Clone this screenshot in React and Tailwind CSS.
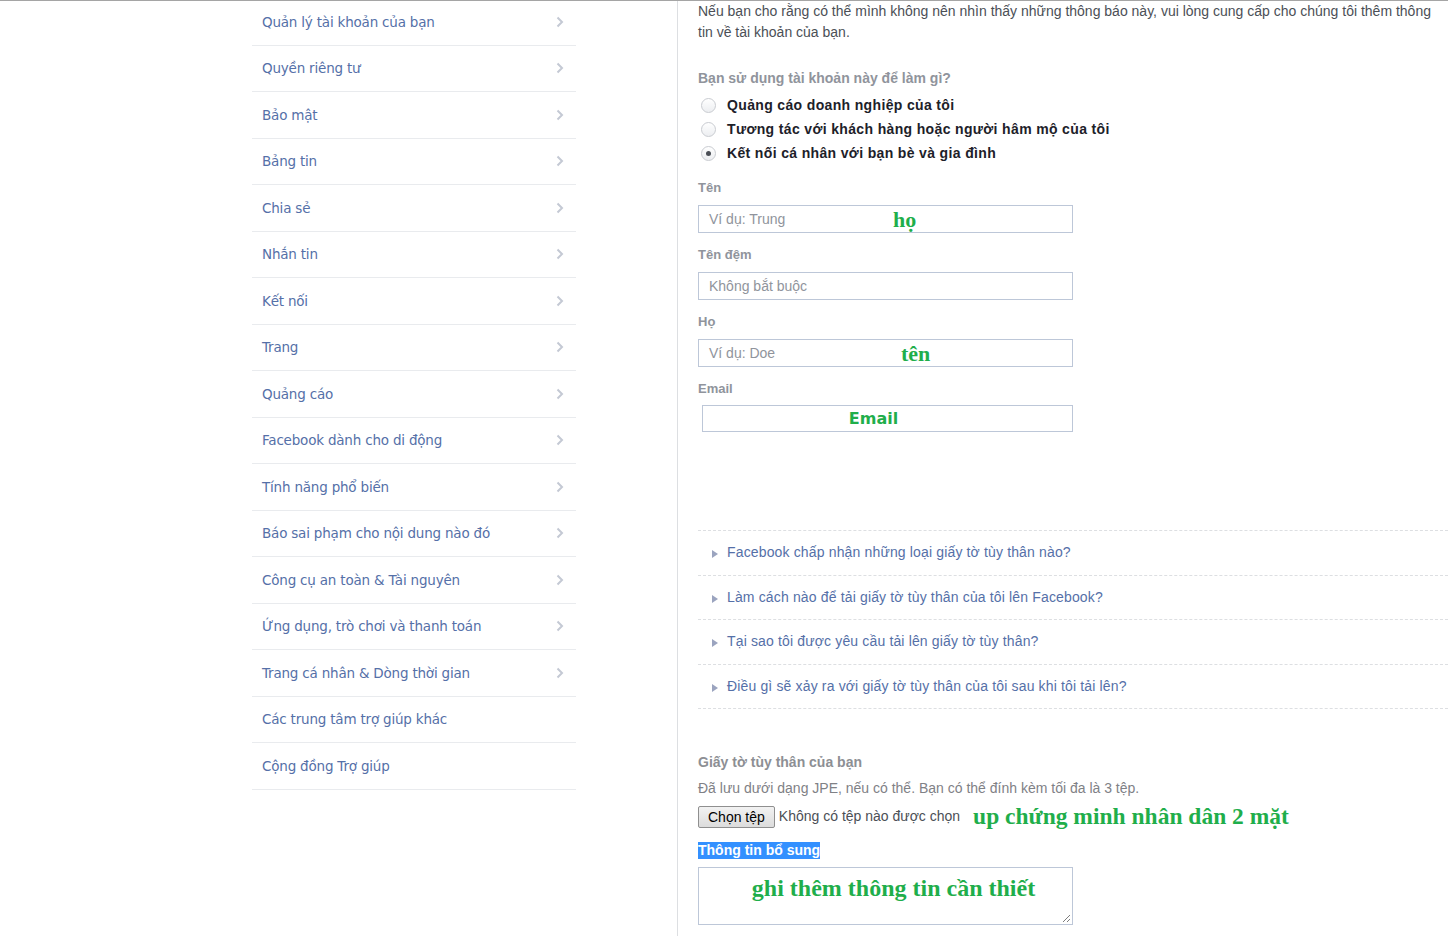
import React from "react";

const sideItems = [
  ["Quản lý tài khoản của bạn", true],
  ["Quyền riêng tư", true],
  ["Bảo mật", true],
  ["Bảng tin", true],
  ["Chia sẻ", true],
  ["Nhắn tin", true],
  ["Kết nối", true],
  ["Trang", true],
  ["Quảng cáo", true],
  ["Facebook dành cho di động", true],
  ["Tính năng phổ biến", true],
  ["Báo sai phạm cho nội dung nào đó", true],
  ["Công cụ an toàn & Tài nguyên", true],
  ["Ứng dụng, trò chơi và thanh toán", true],
  ["Trang cá nhân & Dòng thời gian", true],
  ["Các trung tâm trợ giúp khác", false],
  ["Cộng đồng Trợ giúp", false],
];

const faqs = [
  "Facebook chấp nhận những loại giấy tờ tùy thân nào?",
  "Làm cách nào để tải giấy tờ tùy thân của tôi lên Facebook?",
  "Tại sao tôi được yêu cầu tải lên giấy tờ tùy thân?",
  "Điều gì sẽ xảy ra với giấy tờ tùy thân của tôi sau khi tôi tải lên?",
];

const sans = "font-['Liberation_Sans',Arial,sans-serif]";
const serif = "font-['Liberation_Serif','Times_New_Roman',serif]";

function Chevron() {
  return (
    <svg width="8" height="12" viewBox="0 0 8 12" className="shrink-0">
      <path d="M1.5 1.5 L6 6 L1.5 10.5" fill="none" stroke="#c4c9d4" strokeWidth="2" />
    </svg>
  );
}

function Radio({ checked }) {
  return (
    <span className="w-[15px] h-[15px] rounded-full border border-[#c9ccd1] bg-gradient-to-b from-white to-[#eceef1] flex items-center justify-center shrink-0">
      {checked && <span className="w-[5px] h-[5px] rounded-full bg-[#4b4f56]" />}
    </span>
  );
}

function Field({ label, placeholder, overlay, overlayClass }) {
  return (
    <div className="flex flex-col">
      <div className="text-[13px] font-bold text-[#90949c] leading-[16px] h-[17px]">{label}</div>
      <div className="mt-[8px] w-[375px] h-[28px] border border-[#bdc7d8] flex items-center pl-[10px] relative">
        <span className="text-[14px] text-[#90949c]">{placeholder}</span>
        {overlay && (
          <span className={`absolute top-1/2 -translate-y-1/2 ${serif} font-bold text-[22px] text-[#1fae4b] ${overlayClass}`}>
            {overlay}
          </span>
        )}
      </div>
    </div>
  );
}

export default function App() {
  return (
    <div className={`w-[1448px] h-[936px] overflow-hidden bg-white ${sans} border-t border-[#a5a5a5] flex`}>
      {/* left blank */}
      <div className="w-[252px] shrink-0" />

      {/* sidebar */}
      <div className="w-[324px] shrink-0 flex flex-col -mt-[2px]">
        {sideItems.map(([t, chev], i) => (
          <div
            key={i}
            className="h-[46.5px] border-b border-[#e9ebee] flex items-center justify-between pl-[10px] pr-[12px]"
          >
            <span className="text-[#5570a8] font-['DejaVu_Sans',sans-serif] text-[13.5px] tracking-[-0.2px]">{t}</span>
            {chev && <Chevron />}
          </div>
        ))}
      </div>

      <div className="w-[101px] shrink-0" />

      {/* main content */}
      <div className="flex-1 border-l border-[#dddfe2] pl-[20px] h-full">
        <div className="w-[750px]">
          <p className="text-[14px] leading-[21px] text-[#4b4f56] mt-[0px]">
            Nếu bạn cho rằng có thể mình không nên nhìn thấy những thông báo này, vui lòng cung cấp cho chúng tôi thêm thông tin về tài khoản của bạn.
          </p>

          <div className="mt-[26px] text-[14px] font-bold text-[#90949c] leading-[18px]">
            Bạn sử dụng tài khoản này để làm gì?
          </div>
          <div className="mt-[6px] flex flex-col pl-[3px]">
            {[
              ["Quảng cáo doanh nghiệp của tôi", false],
              ["Tương tác với khách hàng hoặc người hâm mộ của tôi", false],
              ["Kết nối cá nhân với bạn bè và gia đình", true],
            ].map(([t, c], i) => (
              <label key={i} className="h-[24px] flex items-center gap-[11px]">
                <Radio checked={c} />
                <span className="text-[14px] font-bold text-[#1d2129] tracking-[0.35px]">{t}</span>
              </label>
            ))}
          </div>

          <div className="mt-[15px] flex flex-col gap-[14px]">
            <Field label="Tên" placeholder="Ví dụ: Trung" overlay="họ" overlayClass="left-[194px]" />
            <Field label="Tên đệm" placeholder="Không bắt buộc" />
            <Field label="Họ" placeholder="Ví dụ: Doe" overlay="tên" overlayClass="left-[202px]" />
            <div className="flex flex-col">
              <div className="text-[13px] font-bold text-[#90949c] leading-[16px] h-[17px]">Email</div>
              <div className="mt-[7px] ml-[4px] w-[371px] h-[27px] border border-[#bdc7d8] flex items-center justify-center pr-[28px]">
                <span className="font-['DejaVu_Sans',sans-serif] font-bold text-[16px] text-[#1fae4b]">Email</span>
              </div>
            </div>
          </div>

          {/* FAQ */}
          <div className="mt-[98px] border-t border-dashed border-[#dddfe2]">
            {faqs.map((q, i) => (
              <div key={i} className="h-[44.5px] border-b border-dashed border-[#dddfe2] flex items-center pl-[14px] gap-[9px]">
                <svg width="6" height="8" viewBox="0 0 6 8" className="mt-[3px]">
                  <path d="M0 0 L6 4 L0 8 Z" fill="#9ba4bf" />
                </svg>
                <span className="text-[14px] text-[#5570a8] tracking-[0.15px]">{q}</span>
              </div>
            ))}
          </div>

          {/* upload */}
          <div className="mt-[44px] text-[14px] font-bold text-[#8d8f94] leading-[18px]">Giấy tờ tùy thân của bạn</div>
          <div className="mt-[8px] text-[14px] text-[#7f8186] leading-[18px]">
            Đã lưu dưới dạng JPE, nếu có thể. Bạn có thể đính kèm tối đa là 3 tệp.
          </div>
          <div className="mt-[8px] flex items-center">
            <button className="h-[22px] px-[9px] border border-[#8f8f8f] rounded-[2px] bg-gradient-to-b from-[#f2f2f2] to-[#dcdcdc] text-[14px] text-black leading-none">
              Chọn tệp
            </button>
            <span className="ml-[4px] text-[14px] text-[#4b4f56]">Không có tệp nào được chọn</span>
            <span className={`ml-[13px] ${serif} font-bold text-[23.5px] text-[#1fae4b] leading-none`}>
              up chứng minh nhân dân 2 mặt
            </span>
          </div>
          <div className="mt-[9px]">
            <span className="bg-[#3390ff] text-white text-[14px] font-bold leading-[17px] inline-block">Thông tin bổ sung</span>
          </div>
          <div className="mt-[5px] w-[375px] h-[58px] border border-[#bdc7d8] relative flex justify-center pt-[5px] pl-[16px]">
            <span className={`${serif} font-bold text-[24px] text-[#1fae4b] leading-[30px]`}>ghi thêm thông tin cần thiết</span>
            <svg width="9" height="9" viewBox="0 0 9 9" className="absolute right-[1px] bottom-[1px]">
              <path d="M8 1 L1 8 M8 5 L5 8" stroke="#7d7d7d" strokeWidth="1" />
            </svg>
          </div>
        </div>
      </div>
    </div>
  );
}
